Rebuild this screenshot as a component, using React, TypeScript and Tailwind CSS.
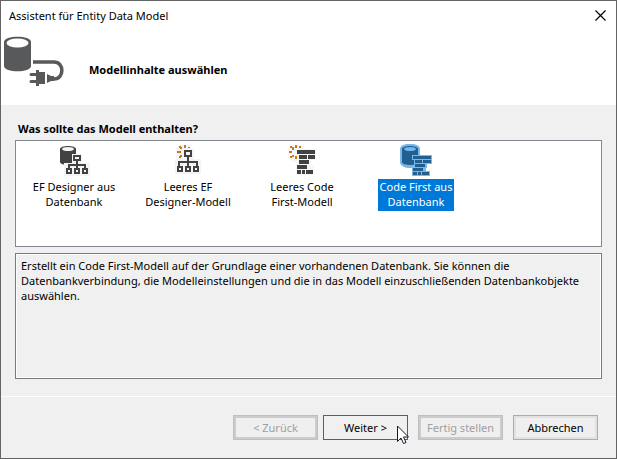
import React, { useState } from 'react';
import { clsx } from 'clsx';

interface IconProps {
  selected: boolean;
}

function ConnectionIcon() {
  return (
    <svg width="62" height="54" viewBox="0 0 62 54" className="shrink-0" aria-hidden="true">
      <path d="M1 6C1 -1 28 -1 28 6V30C28 37 1 37 1 30Z" fill="#58595b" />
      <ellipse cx="14.5" cy="7" rx="11" ry="4.5" fill="#fff" />
      <path d="M30 26H51C61.500 26 61.500 43 51 43H49" fill="none" stroke="#58595b" strokeWidth="3.500" />
      <path
        d="M33 34H36V36H42V48H36V50H33V47H28A1.500 1.500 0 0 1 28 44H33V40H28A1.500 1.500 0 0 1 28 37H33ZM44 38L48 40H51V45H48L44 47Z"
        fill="#58595b"
      />
    </svg>
  );
}

function Cylinder({ body, top }: { body: string; top: string }) {
  return (
    <>
      <path d="M2 5C2 1 18 1 18 5V18C18 22 2 22 2 18Z" fill={body} />
      <ellipse cx="10" cy="5" rx="6" ry="2" fill={top} />
    </>
  );
}

function DesignerFromDatabaseIcon() {
  return (
    <svg width="32" height="32" viewBox="0 0 32 32" aria-hidden="true">
      <Cylinder body="#424242" top="#f4f4f4" />
      <g shapeRendering="crispEdges">
        <path d="M14 10H24V19H32V32H6V19H14Z" fill="#f4f4f4" />
        <path
          fillRule="evenodd"
          d="M15 11H23V17H20V20H28V24H30V30H24V24H26V22H20V24H22V30H16V24H18V22H12V24H14V30H8V24H10V20H18V17H15ZM17 13V15H21V13ZM10 26V28H12V26ZM18 26V28H20V26ZM26 26V28H28V26Z"
          fill="#424242"
        />
      </g>
    </svg>
  );
}

function EmptyDesignerIcon() {
  return (
    <svg width="32" height="32" viewBox="0 0 32 32" aria-hidden="true">
      <g shapeRendering="crispEdges">
        <path d="M7 1H19V5H22V15H29V30H3V15H5L4 12V5Z" fill="#f4f4f4" />
        <path
          fillRule="evenodd"
          d="M12 6H20V13H17V17H26V22H27V28H21V22H24V19H17V22H19V28H13V22H15V19H8V22H11V28H5V22H6V17H15V13H12ZM14 8V11H18V8ZM7 24V26H9V24ZM15 24V26H17V24ZM23 24V26H25V24Z"
          fill="#424242"
        />
        <path
          d="M12 1H14V4H12ZM7 2H9V3H10V5H8V4H7ZM16 3H18V4H16ZM5 7H9V9H5ZM8 11H10V13H9V14H7V12H8Z"
          fill="#c27d1a"
        />
      </g>
    </svg>
  );
}

function EmptyCodeIcon() {
  return (
    <svg width="32" height="32" viewBox="0 0 32 32" aria-hidden="true">
      <path d="M5 1H16L18 5H30V16H25V21H28V31H10V18H6L2 13V5Z" fill="#f6f6f6" />
      <g shapeRendering="crispEdges">
        <path
          d="M9 1H11V4H9ZM4 2H6V3H8V6H6V4H4ZM13 2H15V4H13ZM3 7H6V9H3ZM6 11H8V13H6V14H4V12H6ZM9 12H11V15H9Z"
          fill="#c27d1a"
        />
        <path
          d="M11 6H29V10H11ZM13 11H21V15H13ZM22 11H29V15H22ZM13 16H23V20H13ZM11 21H21V25H11ZM11 26H15V30H11ZM16 26H19V30H16ZM20 26H27V30H20Z"
          fill="#424242"
        />
      </g>
    </svg>
  );
}

function CodeFromDatabaseIcon({ selected }: IconProps) {
  const dark = selected ? '#215f90' : '#424242';
  const light = selected ? '#77b7e9' : '#f4f4f4';
  return (
    <svg width="32" height="32" viewBox="0 0 32 32" aria-hidden="true">
      <path d="M0 5C0 -2 20 -2 20 5V18C20 26 0 26 0 18Z" fill={light} />
      <Cylinder body={dark} top={light} />
      <g shapeRendering="crispEdges">
        <path d="M12 11H32V20H27V24H26V27H30V32H12V24H14V16H12Z" fill={light} />
        <path
          d="M13 12H31V15H13ZM15 16H22V19H15ZM23 16H31V19H23ZM15 20H25V23H15ZM13 24H23V27H13ZM13 28H17V31H13ZM18 28H21V31H18ZM22 28H29V31H22Z"
          fill={dark}
        />
      </g>
    </svg>
  );
}

const models = [
  { id: 'ef-designer-db', lines: ['EF Designer aus', 'Datenbank'], icon: DesignerFromDatabaseIcon },
  { id: 'ef-designer-empty', lines: ['Leeres EF', 'Designer-Modell'], icon: EmptyDesignerIcon },
  { id: 'code-first-empty', lines: ['Leeres Code', 'First-Modell'], icon: EmptyCodeIcon },
  { id: 'code-first-db', lines: ['Code First aus', 'Datenbank'], icon: CodeFromDatabaseIcon },
];

interface WizardButtonProps {
  children: React.ReactNode;
  variant?: 'default' | 'primary';
  disabled?: boolean;
}

function WizardButton({ children, variant = 'default', disabled }: WizardButtonProps) {
  return (
    <button
      type="button"
      disabled={disabled}
      className={clsx(
        'h-[25px] w-[85px] border whitespace-nowrap',
        disabled && 'border-[#bfbfbf] bg-[#efefef] text-[#a0a0a0] inset-ring-2 inset-ring-[#cccccc]',
        !disabled && variant === 'primary' && 'border-[#0078d7] bg-[#f0f0f0]',
        !disabled && variant === 'default' && 'border-[#adadad] bg-[#efefef] inset-ring-2 inset-ring-[#e1e1e1]'
      )}
    >
      {children}
    </button>
  );
}

function Cursor() {
  return (
    <svg width="13" height="20" viewBox="0 0 13 20" className="absolute top-2.5 left-[74px]" aria-hidden="true">
      <path d="M.5 1V16.500L4 13L6.500 18.500L9 17.500L6.500 12H11.500Z" fill="#fff" stroke="#1a1a26" />
    </svg>
  );
}

export default function App() {
  const [selectedId, setSelectedId] = useState('code-first-db');

  return (
    <div className="flex min-h-screen flex-col border border-[#646464] bg-[#f0f0f0] font-['Noto_Sans','Open_Sans',sans-serif] text-[11px] leading-[15px] text-black">
      <header className="bg-white pb-[15px]">
        <div className="flex h-7 items-center justify-between pr-2.5 pl-2">
          <h1>Assistent für Entity Data Model</h1>
          <button type="button" aria-label="Schließen">
            <svg width="11" height="11" viewBox="0 0 11 11">
              <path d="M.5 .5L10.5 10.5M10.5 .5L.5 10.5" stroke="#000" strokeWidth="1.2" />
            </svg>
          </button>
        </div>
        <div className="flex items-center gap-6 pt-[7px] pl-0.5">
          <ConnectionIcon />
          <h2 className="pt-3 font-bold">Modellinhalte auswählen</h2>
        </div>
      </header>

      <main className="px-3.5 pt-4 pb-[17px]">
        <h3 id="models-label" className="pl-[3px] font-bold">Was sollte das Modell enthalten?</h3>
        <div role="group" aria-labelledby="models-label" className="mt-1 flex h-[107px] items-start border border-[#828790] bg-white px-px pt-[3px]">
          {models.map(({ id, lines, icon: ModelIcon }) => {
            const selected = id === selectedId;
            return (
              <button
                key={id}
                type="button"
                aria-pressed={selected}
                onClick={() => setSelectedId(id)}
                className="flex w-[114px] flex-col items-center gap-[3px]"
              >
                <ModelIcon selected={selected} />
                <span className={clsx('block px-0.5 pb-0.5 whitespace-nowrap', selected && 'bg-[#0078d7] text-white')}>
                  {lines.map((line) => (
                    <span key={line} className="block">{line}</span>
                  ))}
                </span>
              </button>
            );
          })}
        </div>
        <textarea
          readOnly
          aria-label="Beschreibung"
          className="mt-1.5 block h-[126px] w-full resize-none border border-[#7a7a7a] bg-[#f0f0f0] px-[5px] py-1 inset-ring inset-ring-white outline-none"
          value="Erstellt ein Code First-Modell auf der Grundlage einer vorhandenen Datenbank. Sie können die Datenbankverbindung, die Modelleinstellungen und die in das Modell einzuschließenden Datenbankobjekte auswählen."
        />
      </main>

      <footer className="flex flex-1 items-start justify-end border-t border-white pt-[18px] pr-[18px]">
        <div className="flex gap-2.5">
          <div className="flex gap-[5px]">
            <WizardButton disabled>&lt; Zurück</WizardButton>
            <div className="relative">
              <WizardButton variant="primary">Weiter &gt;</WizardButton>
              <Cursor />
            </div>
          </div>
          <WizardButton disabled>Fertig stellen</WizardButton>
          <WizardButton>Abbrechen</WizardButton>
        </div>
      </footer>
    </div>
  );
}
